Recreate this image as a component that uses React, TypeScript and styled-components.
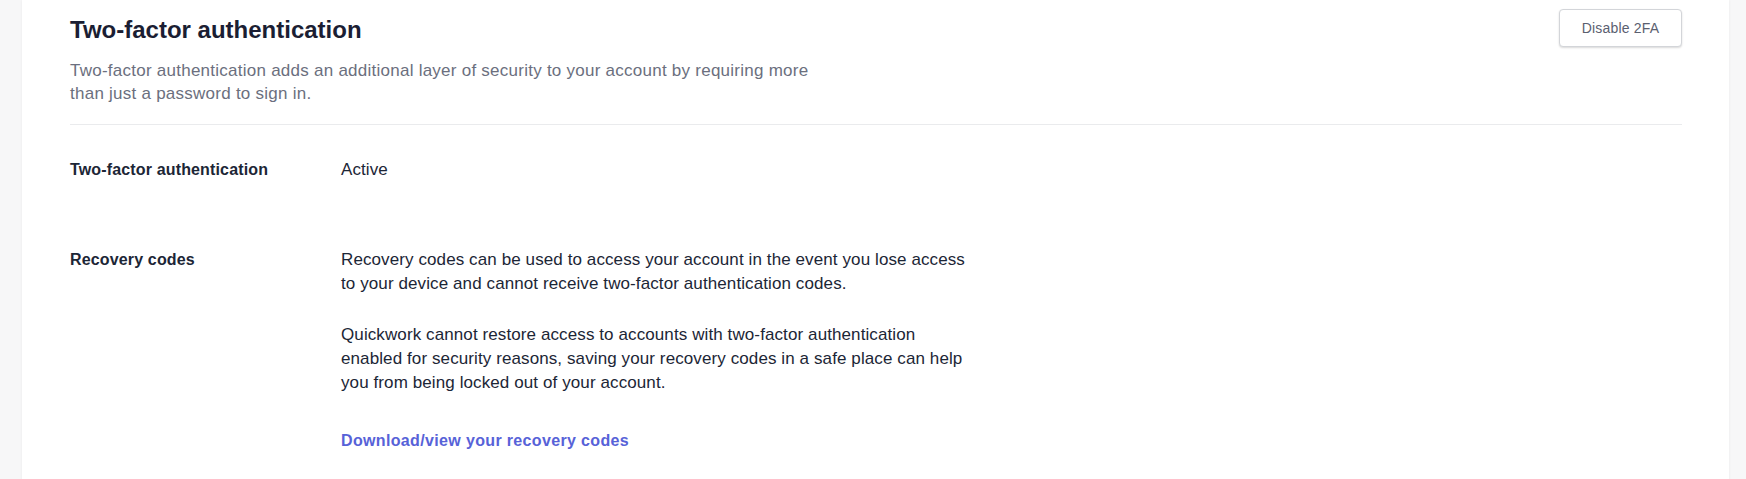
import styled, { createGlobalStyle } from 'styled-components';
import React from 'react';

const GlobalStyle = createGlobalStyle`
  html, body {
    margin: 0;
    padding: 0;
    background: #f7f7f8;
    font-family: "Liberation Sans", Arial, sans-serif;
  }
`;

const Page = styled.div`
  padding: 0 17px 0 22px;
  min-height: 479px;
`;

const Card = styled.section`
  background: #ffffff;
  min-height: 479px;
  padding: 9px 47px 40px 48px;
  box-shadow: 0 0 3px rgba(0, 0, 0, 0.06);
`;

const Header = styled.div`
  display: flex;
  justify-content: space-between;
  align-items: flex-start;
`;

const HeaderText = styled.div`
  display: flex;
  flex-direction: column;
  padding-top: 5px;
`;

const Title = styled.h2`
  margin: 0;
  font-size: 24px;
  line-height: 32px;
  font-weight: 700;
  color: #1b1e33;
`;

const Description = styled.p`
  margin: 13px 0 0;
  max-width: 745px;
  font-size: 17px;
  line-height: 23px;
  letter-spacing: 0.25px;
  color: #6b6f7e;
`;

const Button = styled.button`
  width: 123px;
  height: 38px;
  background: #ffffff;
  border: 1px solid #d3d5d9;
  border-radius: 4px;
  box-shadow: 0 1px 2px rgba(0, 0, 0, 0.15);
  font-family: inherit;
  font-size: 14px;
  letter-spacing: 0.2px;
  color: #5b6070;
  cursor: pointer;
`;

const Divider = styled.hr`
  margin: 19px 0 0;
  border: 0;
  border-top: 1px solid #eaebed;
`;

const Rows = styled.div`
  display: flex;
  flex-direction: column;
  gap: 66px;
  padding-top: 33px;
`;

const Row = styled.div`
  display: grid;
  grid-template-columns: 271px 1fr;
  align-items: start;
`;

const Label = styled.div`
  font-size: 16px;
  line-height: 24px;
  font-weight: 700;
  letter-spacing: 0.15px;
  color: #1c2636;
`;

const Value = styled.div`
  display: flex;
  flex-direction: column;
  max-width: 635px;
  font-size: 17px;
  line-height: 24px;
  letter-spacing: 0.1px;
  color: #1c2636;
`;

const Paragraph = styled.p<{ $gap?: number }>`
  margin: ${({ $gap }) => ($gap ? `${$gap}px` : '0')} 0 0;
`;

const Link = styled.a`
  margin-top: 34px;
  font-size: 16px;
  font-weight: 700;
  letter-spacing: 0.35px;
  color: #5762d8;
  text-decoration: none;
  cursor: pointer;
`;

const App = () => {
  return (
    <>
      <GlobalStyle />
      <Page>
        <Card>
          <Header>
            <HeaderText>
              <Title>Two-factor authentication</Title>
              <Description>
                Two-factor authentication adds an additional layer of security to your account by
                requiring more than just a password to sign in.
              </Description>
            </HeaderText>
            <Button>Disable 2FA</Button>
          </Header>
          <Divider />
          <Rows>
            <Row>
              <Label>Two-factor authentication</Label>
              <Value>Active</Value>
            </Row>
            <Row>
              <Label>Recovery codes</Label>
              <Value>
                <Paragraph>
                  Recovery codes can be used to access your account in the event you lose access
                  to your device and cannot receive two-factor authentication codes.
                </Paragraph>
                <Paragraph $gap={27}>
                  Quickwork cannot restore access to accounts with two-factor authentication
                  enabled for security reasons, saving your recovery codes in a safe place can help
                  you from being locked out of your account.
                </Paragraph>
                <Link>Download/view your recovery codes</Link>
              </Value>
            </Row>
          </Rows>
        </Card>
      </Page>
    </>
  );
};

export default App;
